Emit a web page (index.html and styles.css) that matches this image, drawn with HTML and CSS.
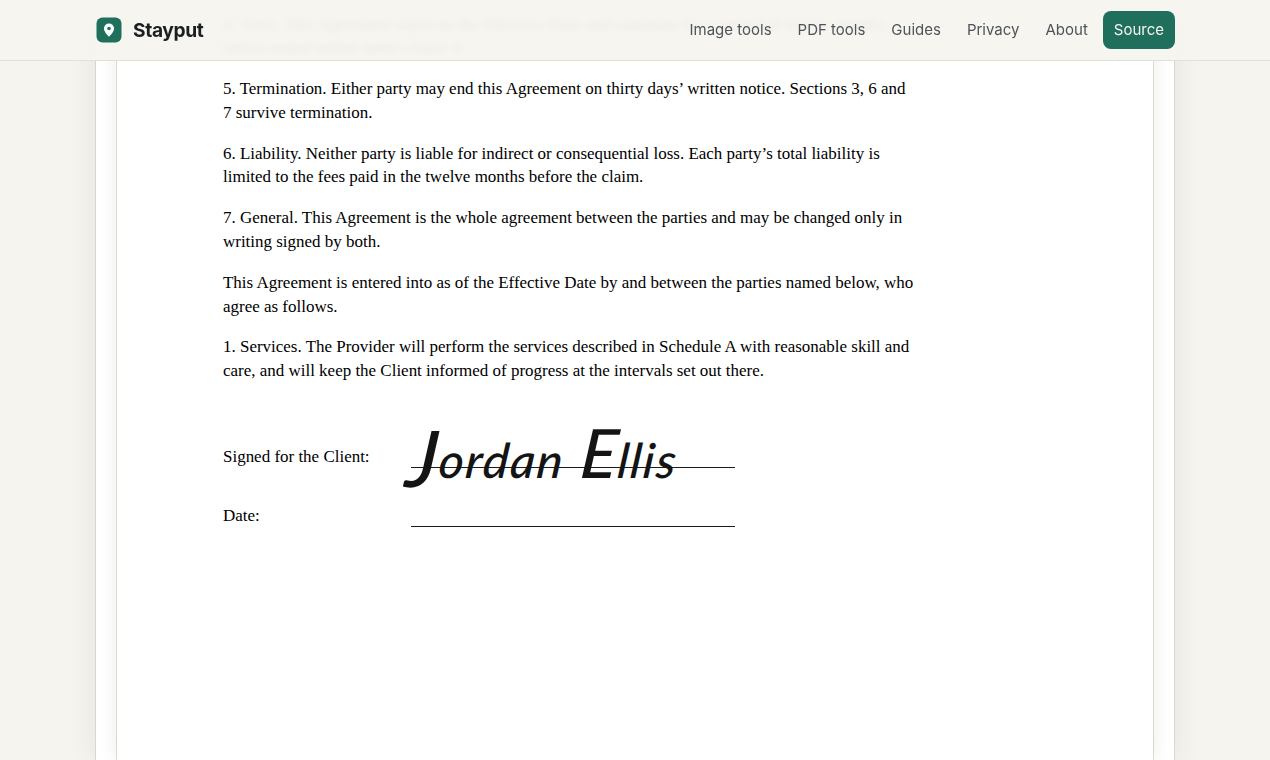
FILE: index.html
```html
<!DOCTYPE html>
<html lang="en">
<head>
<meta charset="utf-8">
<title>Stayput</title>
<link rel="stylesheet" href="styles.css">
</head>
<body>
<header class="topbar">
  <a class="brand" href="#">
    <svg class="brand-mark" viewBox="0 0 26 26" width="26" height="26" aria-hidden="true">
      <rect x="0.5" y="0.5" width="25" height="25" rx="6" fill="#1f6f5c"/>
      <path d="M13 6.4a5.1 5.1 0 0 0-5.1 5.1c0 3.5 5.1 8.2 5.1 8.2s5.1-4.7 5.1-8.2A5.1 5.1 0 0 0 13 6.4Z" fill="#fff"/>
      <circle cx="13" cy="11.5" r="1.8" fill="#1f6f5c"/>
    </svg>
    <span class="brand-name">Stayput</span>
  </a>
  <nav class="nav">
    <a href="#">Image tools</a>
    <a href="#">PDF tools</a>
    <a href="#">Guides</a>
    <a href="#">Privacy</a>
    <a href="#">About</a>
    <a class="nav-source" href="#">Source</a>
  </nav>
</header>
<main class="sheet">
  <article class="page">
    <p>4. Term. This Agreement starts on the Effective Date and continues for a period of twelve months<br>unless ended earlier under clause 3.</p>
    <p>5. Termination. Either party may end this Agreement on thirty days’ written notice. Sections 3, 6 and 7 survive termination.</p>
    <p>6. Liability. Neither party is liable for indirect or consequential loss. Each party’s total liability is limited to the fees paid in the twelve months before the claim.</p>
    <p>7. General. This Agreement is the whole agreement between the parties and may be changed only in writing signed by both.</p>
    <p>This Agreement is entered into as of the Effective Date by and between the parties named below, who agree as follows.</p>
    <p>1. Services. The Provider will perform the services described in Schedule A with reasonable skill and care, and will keep the Client informed of progress at the intervals set out there.</p>
    <div class="sign-row sign-first">
      <span class="sign-label">Signed for the Client:</span>
      <span class="sign-line"><span class="signature"><span class="sig-cap-j">J</span>ordan <span class="sig-cap-e">E</span>llis</span></span>
    </div>
    <div class="sign-row">
      <span class="sign-label">Date:</span>
      <span class="sign-line"></span>
    </div>
  </article>
</main>
</body>
</html>
```
FILE: styles.css
```css
* { box-sizing: border-box; }
html, body { margin: 0; height: 100%; }
body {
  height: 760px;
  overflow: hidden;
  background: #f6f4ef;
  font-family: "Inter", "Liberation Sans", sans-serif;
}
.topbar {
  position: fixed;
  top: 0;
  left: 0;
  right: 0;
  z-index: 5;
  height: 61px;
  padding: 0 95px 0 96px;
  display: flex;
  align-items: center;
  justify-content: space-between;
  background: rgba(246, 244, 239, 0.95);
  border-bottom: 1px solid #e2dfd3;
  backdrop-filter: blur(3px);
}
.brand {
  display: flex;
  align-items: center;
  gap: 11px;
  text-decoration: none;
  color: #1c1f21;
}
.brand-mark { display: block; }
.brand-name { font-size: 19.2px; font-weight: 700; letter-spacing: -0.4px; }
.nav { display: flex; align-items: center; gap: 4px; }
.nav a {
  padding: 0 11px;
  font-size: 15px;
  line-height: 38px;
  color: #4f5459;
  text-decoration: none;
}
.nav .nav-source {
  background: #1f6f5c;
  color: #f6f4ef;
  border-radius: 8px;
}
.sheet {
  width: 1080px;
  height: 760px;
  margin: 0 auto;
  padding: 0 20px;
  background: #fff;
  border: 1px solid #d9d7cf;
  border-width: 0 1px;
  box-shadow: 0 0 26px rgba(60, 55, 40, 0.09);
}
.page {
  height: 100%;
  padding: 12.6px 106px 0;
  background: #fff;
  border: 1px solid #dcdacd;
  border-width: 0 1px;
  box-shadow: 0 0 18px rgba(30, 30, 30, 0.08);
  font-family: "Liberation Serif", serif;
  font-size: 16.98px;
  line-height: 23.73px;
  color: #000;
}
.page p { margin: 0 0 17.1px; width: 692px; }
.sign-row { display: flex; align-items: flex-end; height: 34px; }
.sign-first { margin-top: 50px; margin-bottom: 25px; }
.sign-label { width: 188px; line-height: 21px; }
.sign-line {
  position: relative;
  display: block;
  width: 324px;
  height: 24px;
  border-bottom: 1px solid #1a1a1a;
  margin-bottom: -1px;
}
.signature {
  position: absolute;
  left: -4px;
  bottom: -23px;
  font-family: "Lato", sans-serif;
  font-style: italic;
  font-weight: 500;
  font-size: 48px;
  line-height: 60px;
  letter-spacing: 1.8px;
  word-spacing: 3px;
  white-space: nowrap;
  color: #141414;
  transform: skewX(-6deg);
}
.sig-cap-j { font-size: 78px; line-height: 0; letter-spacing: 1px; vertical-align: -9px; }
.sig-cap-e { font-size: 68px; line-height: 0; letter-spacing: 1px; }
```
